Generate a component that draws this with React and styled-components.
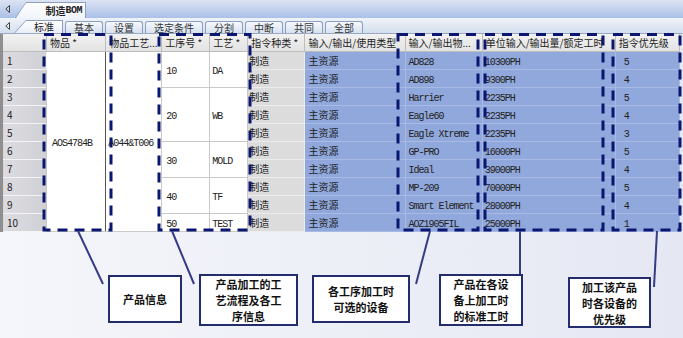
import React from "react";
import styled, { createGlobalStyle } from "styled-components";

const GlobalStyle = createGlobalStyle`
  body {
    margin: 0;
    background: #eef0f7;
  }
`;

const CJK = `"Noto Sans CJK SC", "Noto Sans", sans-serif`;
const MONO = `"Liberation Mono", "Noto Sans CJK SC", monospace`;

const Page = styled.div`
  position: relative;
  width: 683px;
  height: 338px;
  overflow: hidden;
  background: linear-gradient(to right, #f5f6fb, #e5e8f3);
  font-family: ${CJK};
  color: #222;
`;

const DocBar = styled.div`
  height: 19px;
  display: flex;
  align-items: flex-end;
  box-sizing: border-box;
  padding-left: 3px;
  background: linear-gradient(#dbe4f3, #abc0e7);
  border-bottom: 1px solid #eef2f9;
`;

const Arrow = styled.div`
  width: 9px;
  height: 100%;
  display: flex;
  align-items: center;
  justify-content: center;
  margin-right: ${(p) => p.$gap || 0}px;
`;

const ShapeTab = styled.div`
  width: ${(p) => p.$w}px;
  height: ${(p) => p.$h}px;
  box-sizing: border-box;
  padding: 1px 1px 0 1px;
  background: #8d9fbd;
  clip-path: polygon(${(p) => p.$slant}px 0, 100% 0, 100% 100%, 0 100%);
`;

const ShapeTabInner = styled.div`
  height: 100%;
  display: flex;
  align-items: center;
  justify-content: flex-end;
  padding-right: ${(p) => p.$pr}px;
  background: ${(p) => p.$bg};
  clip-path: polygon(${(p) => p.$slant - 1}px 0, 100% 0, 100% 100%, 0 100%);
  font-size: 10px;
  font-weight: ${(p) => (p.$bold ? 700 : 400)};
  line-height: 1;
`;

const TabStrip = styled.div`
  height: 14px;
  display: flex;
  align-items: flex-end;
  gap: 2px;
  padding-left: 3px;
  background: linear-gradient(#eef2f9, #d4deed);
  border-bottom: 1px solid #9aa9c2;
`;

const Tab = styled.div`
  height: 12px;
  box-sizing: border-box;
  padding: 0 8px;
  border: 1px solid #8d9fbd;
  border-bottom: none;
  border-radius: 3px 3px 0 0;
  background: linear-gradient(#f6f9fd, #d6e1f0);
  font-size: 10px;
  line-height: 11px;
  color: #333;
`;

const Grid = styled.table`
  border-collapse: collapse;
  table-layout: fixed;
  width: 680px;
  border-left: 3px solid #8f8f8f;
  font-size: 10px;
`;

const Head = styled.th`
  height: 17px;
  padding: 0 3px;
  font-weight: 400;
  text-align: left;
  white-space: nowrap;
  overflow: hidden;
  background: linear-gradient(#f2f2f2, #e2e2e2);
  border: 1px solid #bdbdbd;
  border-top: none;
  color: #222;
`;

const tones = {
  num: "linear-gradient(to right, #dcdce0, #cfd0d6)",
  white: "#ffffff",
  gray: "#dcdcdc",
  blue: "#90a8dc",
};

const lines = {
  num: "#f4f4f6",
  white: "#c9c9c9",
  gray: "#ececec",
  blue: "#a9bbe5",
};

const Cell = styled.td`
  height: 17px;
  padding: 0 ${(p) => p.$pad ?? 3}px;
  white-space: nowrap;
  overflow: hidden;
  background: ${(p) => tones[p.$tone]};
  border: 1px solid ${(p) => lines[p.$tone]};
  border-right-color: ${(p) => (p.$dark ? "#555" : lines[p.$tone])};
  color: #222;
  vertical-align: middle;
`;

const Code = styled.span`
  font-family: ${MONO};
  font-size: 10px;
  letter-spacing: -1px;
`;

const Overlay = styled.svg`
  position: absolute;
  left: 0;
  top: 0;
  pointer-events: none;
`;

const Callout = styled.div`
  position: absolute;
  left: ${(p) => p.$x}px;
  top: ${(p) => p.$y}px;
  width: ${(p) => p.$w}px;
  height: ${(p) => p.$h}px;
  box-sizing: border-box;
  border: 2px solid #232c6c;
  background: #fff;
  display: flex;
  flex-direction: column;
  align-items: center;
  justify-content: center;
  text-align: center;
  font-size: 11px;
  font-weight: 700;
  color: #111;
`;

const CalloutLine = styled.span`
  display: block;
  height: 16px;
  line-height: 16px;
  white-space: nowrap;
`;

const columns = [45, 59, 56, 48, 38, 57, 100, 77, 133, 64];

const headers = [
  "",
  "物品 *",
  "物品工艺...",
  "工序号 *",
  "工艺 *",
  "指令种类 *",
  "输入/输出/使用类型",
  "输入/输出物...",
  "单位输入/输出量/额定工时",
  "指令优先级",
];

const rows = [
  ["AD828", "10300PH", 5],
  ["AD898", "9300PH", 4],
  ["Harrier", "2235PH", 5],
  ["Eagle60", "2235PH", 4],
  ["Eagle Xtreme", "2235PH", 3],
  ["GP-PRO", "16000PH", 5],
  ["Ideal", "39000PH", 4],
  ["MP-209", "70000PH", 5],
  ["Smart Element", "28000PH", 4],
  ["AOZ1905FIL", "25000PH", 1],
];

const steps = {
  0: { no: "10", name: "DA", span: 2 },
  2: { no: "20", name: "WB", span: 3 },
  5: { no: "30", name: "MOLD", span: 2 },
  7: { no: "40", name: "TF", span: 2 },
  9: { no: "50", name: "TEST", span: 1 },
};

const boxes = [
  [44, 111],
  [159, 250],
  [398, 478],
  [485, 603],
  [613, 680],
];

const leaders = [
  [78, 231, 103, 284],
  [172, 231, 194, 284],
  [430, 231, 416, 284],
  [520, 231, 520, 284],
  [657, 231, 654, 287],
];

const notes = [
  { x: 108, y: 275, w: 74, h: 48, text: ["产品信息"] },
  { x: 199, y: 274, w: 99, h: 52, text: ["产品加工的工", "艺流程及各工", "序信息"] },
  { x: 312, y: 275, w: 98, h: 48, text: ["各工序加工时", "可选的设备"] },
  { x: 439, y: 274, w: 84, h: 52, text: ["产品在各设", "备上加工时", "的标准工时"] },
  { x: 568, y: 277, w: 83, h: 51, text: ["加工该产品", "时各设备的", "优先级"] },
];

function LeftArrow() {
  return (
    <svg width="6" height="8" viewBox="0 0 6 8">
      <path d="M4.5 0.5 L0.8 4 L4.5 7.5 Z" fill="none" stroke="#444" strokeWidth="1" />
    </svg>
  );
}

export default function App() {
  return (
    <>
      <GlobalStyle />
      <Page>
        <DocBar>
          <Arrow $gap={3}>
            <LeftArrow />
          </Arrow>
          <ShapeTab $w={71} $h={16} $slant={11}>
            <ShapeTabInner $slant={11} $pr={3} $bold $bg="linear-gradient(#ffffff, #f1f4f9)">
              制造<Code style={{ fontWeight: 700, letterSpacing: "-0.5px" }}>BOM</Code>
            </ShapeTabInner>
          </ShapeTab>
        </DocBar>
        <TabStrip>
          <Arrow $gap={0}>
            <LeftArrow />
          </Arrow>
          <ShapeTab $w={49} $h={13} $slant={12}>
            <ShapeTabInner $slant={12} $pr={8} $bg="linear-gradient(#ffffff, #e9eff8)">
              标准
            </ShapeTabInner>
          </ShapeTab>
          {["基本", "设置", "选定条件", "分割", "中断", "共同", "全部"].map((t) => (
            <Tab key={t}>{t}</Tab>
          ))}
        </TabStrip>
        <Grid>
          <colgroup>
            {columns.map((w, i) => (
              <col key={i} style={{ width: w }} />
            ))}
          </colgroup>
          <thead>
            <tr>
              {headers.map((h, i) => (
                <Head key={i}>{h}</Head>
              ))}
            </tr>
          </thead>
          <tbody>
            {rows.map(([dev, rate, pri], i) => (
              <tr key={i}>
                <Cell $tone="num" $pad={4}>{i + 1}</Cell>
                {i === 0 && (
                  <>
                    <Cell $tone="white" $pad={5} $dark rowSpan={10}>
                      <Code>AOS4784B</Code>
                    </Cell>
                    <Cell $tone="white" $pad={2} rowSpan={10}>
                      <Code>A044&amp;T006</Code>
                    </Cell>
                  </>
                )}
                {steps[i] && (
                  <>
                    <Cell $tone="white" $pad={4} rowSpan={steps[i].span}>
                      <Code>{steps[i].no}</Code>
                    </Cell>
                    <Cell $tone="white" $pad={2} rowSpan={steps[i].span}>
                      <Code>{steps[i].name}</Code>
                    </Cell>
                  </>
                )}
                <Cell $tone="gray" $pad={1}>制造</Cell>
                <Cell $tone="blue" $pad={3}>主资源</Cell>
                <Cell $tone="blue" $pad={3}>
                  <Code>{dev}</Code>
                </Cell>
                <Cell $tone="blue" $pad={2}>
                  <Code>{rate}</Code>
                </Cell>
                <Cell $tone="blue" $pad={8}>
                  <Code>{pri}</Code>
                </Cell>
              </tr>
            ))}
          </tbody>
        </Grid>

        <Overlay width="683" height="338" viewBox="0 0 683 338">
          {boxes.map(([x1, x2], i) => (
            <rect
              key={i}
              x={x1}
              y={34.5}
              width={x2 - x1}
              height={195.5}
              fill="none"
              stroke="#0b1670"
              strokeWidth="3"
              strokeDasharray="10 7"
            />
          ))}
          {leaders.map(([x1, y1, x2, y2], i) => (
            <line key={i} x1={x1} y1={y1} x2={x2} y2={y2} stroke="#363b84" strokeWidth="2" />
          ))}
        </Overlay>

        {notes.map((n, i) => (
          <Callout key={i} $x={n.x} $y={n.y} $w={n.w} $h={n.h}>
            {n.text.map((t) => (
              <CalloutLine key={t}>{t}</CalloutLine>
            ))}
          </Callout>
        ))}
      </Page>
    </>
  );
}
